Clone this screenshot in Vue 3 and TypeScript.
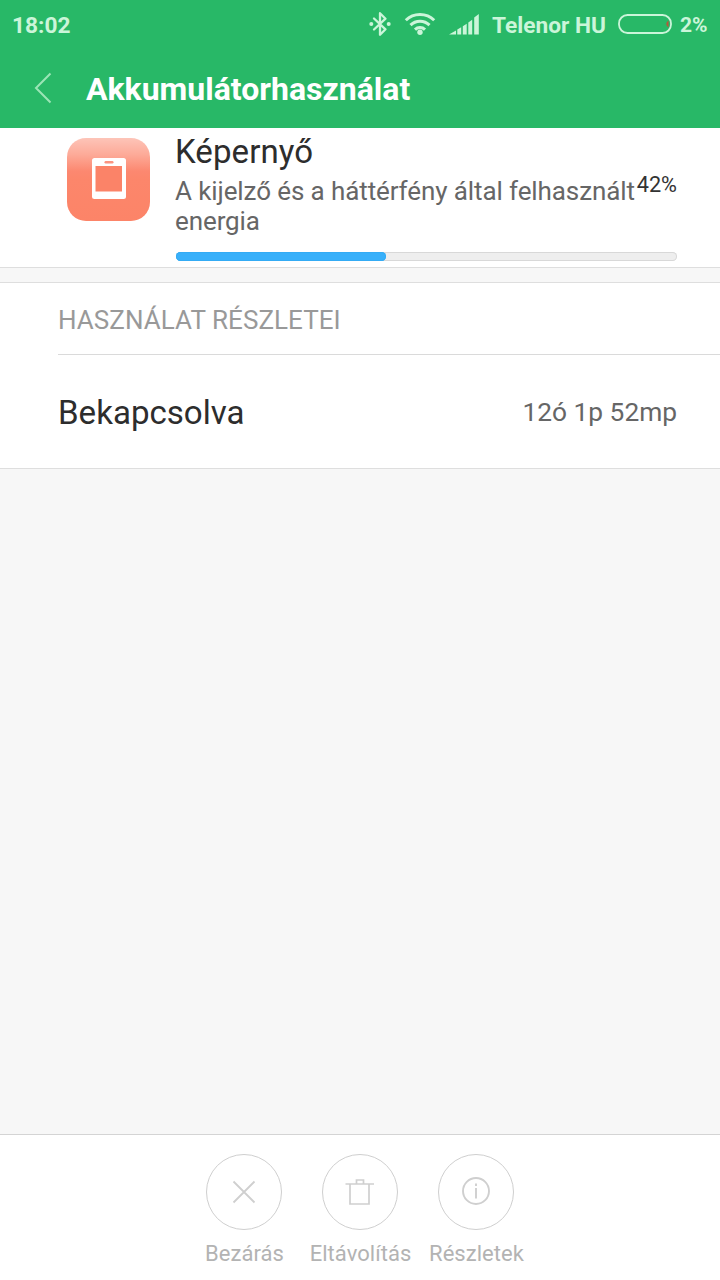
<script setup lang="ts">
interface Action {
  id: 'close' | 'remove' | 'info'
  label: string
}

const percent = 42
const actions: Action[] = [
  { id: 'close', label: 'Bezárás' },
  { id: 'remove', label: 'Eltávolítás' },
  { id: 'info', label: 'Részletek' },
]
</script>

<template>
  <div class="screen">
    <header class="header">
      <div class="status">
        <span class="clock">18:02</span>
        <svg class="bluetooth" width="24" height="28" viewBox="0 0 24 28" fill="none">
          <path d="M5 8.500 16.500 19.300 11 24.800V3.200L16.500 8.700 5 19.500" stroke="currentColor" stroke-width="2.300" stroke-linejoin="round" stroke-linecap="round" />
          <circle cx="2.300" cy="14" r="2" fill="currentColor" />
          <circle cx="19.700" cy="14" r="2" fill="currentColor" />
        </svg>
        <svg class="wifi" width="32" height="24" viewBox="0 0 32 24" fill="none">
          <path d="M1.800 8.300a20 20 0 0 1 28.400 0M6.500 13.100a13.400 13.400 0 0 1 19 0M11 17.600a7.100 7.100 0 0 1 10 0" stroke="currentColor" stroke-width="3" />
          <circle cx="16" cy="20.300" r="2.700" fill="currentColor" />
        </svg>
        <svg class="signal" width="32" height="22" viewBox="0 0 32 22" fill="currentColor">
          <path d="M0 21.500 7 17.500v4zM8.300 16.500l3.900-2.200V21.500H8.300zM13.800 13.300l3.900-2.500V21.500H13.800zM19.300 9.500l3.900-2.800V21.500h-3.900zM25.200 4.500l4.600-3.500V21.500h-4.600z" />
        </svg>
        <span class="carrier">Telenor HU</span>
        <svg class="battery" width="54" height="20" viewBox="0 0 54 20" fill="none">
          <rect x="1" y="1" width="52" height="18" rx="8.500" stroke="currentColor" stroke-width="1.800" />
          <path d="M50.500 6.500q-4.500 3.500 0 7z" fill="#b8573a" />
        </svg>
        <span class="level">2%</span>
      </div>
      <div class="titlebar">
        <svg class="back" width="20" height="32" viewBox="0 0 20 32" fill="none">
          <path d="M16.500 1.500 2 16 16.500 30.500" stroke="currentColor" stroke-width="2" />
        </svg>
        <h1>Akkumulátorhasználat</h1>
      </div>
    </header>

    <section class="summary">
      <svg class="app-icon" width="83" height="83" viewBox="0 0 83 83">
        <defs>
          <linearGradient id="gloss" x1="0" y1="0" x2="0" y2="1">
            <stop offset="0" stop-color="#fdc4b8" />
            <stop offset="0.200" stop-color="#fdaa98" />
            <stop offset="0.400" stop-color="#fc8870" />
            <stop offset="0.500" stop-color="#fc866b" />
            <stop offset="1" stop-color="#fc8468" />
          </linearGradient>
        </defs>
        <rect width="83" height="83" rx="19" fill="url(#gloss)" />
        <rect x="25" y="20" width="34" height="41" rx="2.500" fill="#fff" />
        <rect x="28.500" y="28" width="26.500" height="25.500" fill="#fb8368" />
        <rect x="37.500" y="23" width="9" height="2.500" rx="1.200" fill="#fb9480" />
      </svg>
      <div class="details">
        <h2>Képernyő</h2>
        <div class="description">
          <p>A kijelző és a háttérfény által felhasznált energia</p>
          <span class="percent">{{ percent }}%</span>
        </div>
        <div class="track"><div class="fill" :style="{ width: percent + '%' }"></div></div>
      </div>
    </section>

    <section class="usage">
      <h3>HASZNÁLAT RÉSZLETEI</h3>
      <div class="row">
        <span class="name">Bekapcsolva</span>
        <span class="value">12ó 1p 52mp</span>
      </div>
    </section>

    <footer class="actions">
      <div v-for="action in actions" :key="action.id" class="action">
        <div class="circle">
          <svg width="32" height="32" viewBox="0 0 32 32" fill="none" stroke="currentColor">
            <path v-if="action.id === 'close'" d="M5.500 5.500 26.500 26.500M26.500 5.500 5.500 26.500" stroke-width="1.800" />
            <path v-else-if="action.id === 'remove'" d="M1.500 8H30M6 8V28H25V8M12.500 8V4H19.500V8" stroke-width="1.700" />
            <template v-else>
              <circle cx="16" cy="15" r="13" stroke-width="1.900" />
              <path d="M16 7.500V10M16 12V22.500" stroke-width="1.900" />
            </template>
          </svg>
        </div>
        <span class="label">{{ action.label }}</span>
      </div>
    </footer>
  </div>
</template>

<style>
body {
  margin: 0;
}
</style>

<style scoped>
.screen {
  width: 720px;
  height: 1280px;
  display: flex;
  flex-direction: column;
  overflow: hidden;
  background: #f7f7f7;
  font-family: Roboto, "Noto Sans", sans-serif;
}
h1, h2, h3, p {
  margin: 0;
  font-weight: 400;
}
svg {
  display: block;
  flex: none;
}
.header {
  height: 128px;
  flex: none;
  background: #28b867;
}
.status {
  height: 50px;
  display: flex;
  align-items: center;
  box-sizing: border-box;
  padding: 0 13px 2px 12px;
  color: #cbf5d9;
  font-size: 22.7px;
  font-weight: 700;
  white-space: nowrap;
}
.status span {
  line-height: 28px;
  padding-top: 3px;
}
.clock {
  flex: 1;
}
.bluetooth {
  margin-right: 11px;
}
.wifi {
  margin-right: 13px;
}
.signal {
  margin-right: 11px;
}
.carrier {
  width: 115px;
}
.battery {
  margin: 0 8px 0 11px;
}
.status .level {
  width: 27px;
  padding-top: 2px;
  font-size: 21px;
}
.titlebar {
  height: 78px;
  display: flex;
  align-items: center;
  padding-left: 34px;
}
.back {
  color: #9be5b6;
  margin: 0 32px 2px 0;
}
.titlebar h1 {
  color: #fff;
  font-size: 32px;
  line-height: 40px;
  font-weight: 700;
}
.summary {
  height: 139px;
  flex: none;
  display: flex;
  background: #fff;
  border-bottom: 1px solid #dedede;
}
.app-icon {
  margin: 10px 25px 0 67px;
}
.details {
  width: 502px;
}
.details h2 {
  margin-top: 4px;
  font-size: 33px;
  line-height: 40px;
  letter-spacing: 0.08px;
  color: #2d2d2d;
}
.description {
  display: flex;
  justify-content: space-between;
  margin-top: 4px;
  height: 60px;
}
.description p {
  width: 461px;
  flex: none;
  font-size: 26px;
  line-height: 30px;
  letter-spacing: -0.1px;
  color: #666;
}
.percent {
  font-size: 21.7px;
  line-height: 26px;
  margin-top: -4px;
  color: #333;
}
.track {
  box-sizing: border-box;
  width: 501.5px;
  height: 9px;
  margin: 16px 0 0 0.5px;
  border-radius: 5px;
  background: #eee;
  box-shadow: inset 0 0 0 1px #d8d8d8;
}
.fill {
  height: 9px;
  border-radius: 5px;
  background: #38b0fa;
  box-shadow: inset 0 0 0 1px #34abf4;
}
.usage {
  margin-top: 14px;
  height: 185px;
  flex: none;
  padding-left: 58px;
  background: #fff;
  border-top: 1px solid #dedede;
  border-bottom: 1px solid #dedede;
}
.usage h3 {
  height: 71px;
  font-size: 26px;
  line-height: 75px;
  letter-spacing: 0.05px;
  color: #999;
  border-bottom: 1px solid #dadada;
}
.row {
  height: 113px;
  display: flex;
  align-items: center;
  justify-content: space-between;
  padding-right: 43px;
}
.name {
  padding-top: 2px;
  font-size: 33.1px;
  color: #2d2d2d;
}
.value {
  font-size: 26.3px;
  color: #666;
}
.actions {
  margin-top: auto;
  height: 145px;
  flex: none;
  display: flex;
  justify-content: center;
  background: #fff;
  border-top: 1px solid #d4d4d4;
}
.action {
  width: 116px;
  display: flex;
  flex-direction: column;
  align-items: center;
}
.circle {
  box-sizing: border-box;
  width: 76px;
  height: 76px;
  margin-top: 19px;
  border: 1px solid #cfcfcf;
  border-radius: 50%;
  display: flex;
  align-items: center;
  justify-content: center;
  color: #cfcfcf;
}
.label {
  margin-top: 10px;
  padding-left: 1px;
  font-size: 22px;
  line-height: 28px;
  letter-spacing: 0.04px;
  color: #b3b3b3;
  white-space: nowrap;
}
</style>
